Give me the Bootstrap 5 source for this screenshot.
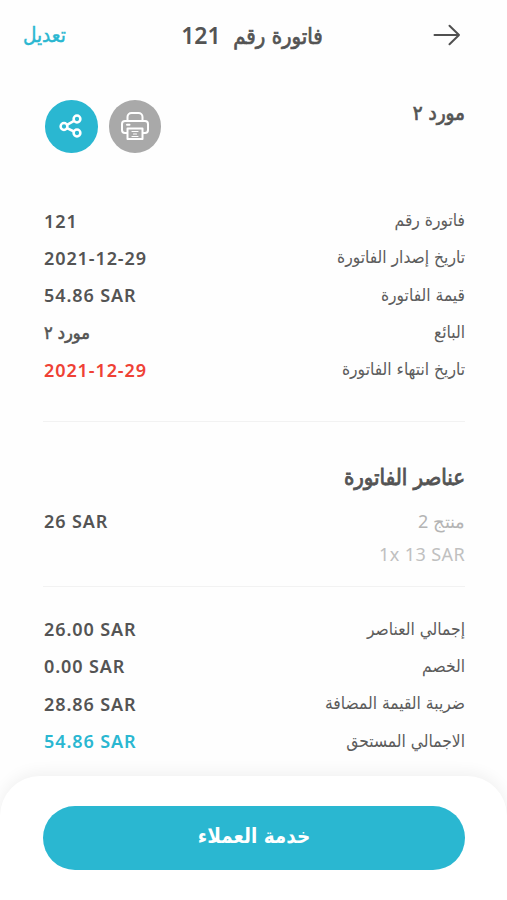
<!DOCTYPE html>
<html lang="ar" dir="rtl">
<head>
<meta charset="utf-8">
<meta name="viewport" content="width=device-width, initial-scale=1">
<title>فاتورة رقم 121</title>
<link href="https://cdn.jsdelivr.net/npm/bootstrap@5.3.0/dist/css/bootstrap.min.css" rel="stylesheet">
<style>
  :root { --ink: #545454; --brand: #2ab7d1; --ar: "DejaVu Sans Condensed", "DejaVu Sans", sans-serif; --latin: "Noto Sans", "Open Sans", sans-serif; }
  body { font-family: var(--ar); color: var(--ink); background: #fefefe; font-size: 17px; }
  .screen { height: 900px; overflow: hidden; }
  .topbar { height: 70px; padding: 0 46px 0 23px; }
  .topbar > * { flex: 1 1 0; }
  .topbar .title { font-size: 22px; flex: 0 0 auto; -webkit-text-stroke: .7px; margin-right: -20px; padding-top: 2px; }
  .num { font: 600 23px/1 var(--latin); letter-spacing: .4px; -webkit-text-stroke: 0; }
  .edit { color: var(--brand); font-size: 20.5px; text-decoration: none; text-align: left; -webkit-text-stroke: .4px; }
  .content { padding: 0 42px 0 43px; }
  .supplier { height: 132px; padding-top: 30px; }
  .supplier h2 { font-size: 20.500px; font-weight: 400; line-height: 27px; -webkit-text-stroke: .7px; }
  .actions { gap: 11px; padding-left: 2px; }
  .round { width: 52.5px; height: 52.5px; background: var(--brand); }
  .round.gray { background: #a9a9a9; }
  .line { height: 37.3px; }
  .item-line { height: 52px; }
  .label { font-size: 17.3px; color: #5c5c5c; padding-top: 1px; }
  .value { font: 600 18px var(--latin); letter-spacing: .9px; padding-left: 1px; }
  .value.ar { font-family: var(--ar); font-size: 18px; font-weight: 400; letter-spacing: 0; -webkit-text-stroke: .6px; }
  .rule { height: 1px; background: #f2f2f2; }
  .section-title { font-size: 22px; font-weight: 400; line-height: 34px; -webkit-text-stroke: .8px; }
  .muted { color: #b4b4b4; font: 18px var(--latin); }
  .qty { text-align: right; letter-spacing: .4px; margin-top: -5px; color: #c0c0c0; }
  .due { color: var(--brand); }
  .late { color: #ef4135; }
  .sheet { height: 124px; border-radius: 40px 40px 0 0; background: #fff; box-shadow: 0 -3px 16px rgba(0,0,0,.06); padding: 30px 42px 0 43px; }
  .cta, .cta:hover { height: 64px; background: var(--brand); color: #fff; font-size: 20.5px; font-weight: 700; padding: 0 0 4px; }
</style>
<script src="https://cdn.jsdelivr.net/npm/bootstrap@5.3.0/dist/js/bootstrap.bundle.min.js"></script>
</head>
<body>
<div class="screen d-flex flex-column">
  <header class="topbar d-flex align-items-center">
    <div class="d-flex"><svg width="28" height="22" viewBox="0 0 28 22" fill="none" stroke="#505050" stroke-width="2" stroke-linecap="round" stroke-linejoin="round"><path d="M1.500 11H26M16.500 1.800l9.500 9.200-9.500 9.200"/></svg></div>
    <div class="title">فاتورة رقم&nbsp; <span class="num">121</span></div>
    <a class="edit" href="#">تعديل</a>
  </header>
  <main class="content flex-grow-1">
    <section class="supplier d-flex justify-content-between">
      <h2 class="m-0">مورد ٢</h2>
      <div class="actions d-flex">
        <button class="btn p-0 border-0 rounded-circle round gray d-flex align-items-center justify-content-center" aria-label="طباعة">
          <svg width="30" height="30" viewBox="0 0 30 30" fill="none" stroke="#fff" stroke-width="2" stroke-linejoin="round" stroke-linecap="round"><path d="M7.500 10V6a4 4 0 0 1 4-4h7a4 4 0 0 1 4 4v4M7 22H5a3 3 0 0 1-3-3v-6a3 3 0 0 1 3-3h20a3 3 0 0 1 3 3v6a3 3 0 0 1-3 3h-2M7.500 17.500h15V28h-15zM7 13.800h2.500"/><path stroke-width="1.200" d="M12 20.500h6M13.500 23h3M12 25.500h6"/></svg>
        </button>
        <button class="btn p-0 border-0 rounded-circle round d-flex align-items-center justify-content-center" aria-label="مشاركة">
          <svg width="24" height="26" viewBox="0 0 24 26" fill="none" stroke="#fff" stroke-width="2.500"><circle cx="5" cy="13.500" r="3.400"/><circle cx="18" cy="6" r="3.400"/><circle cx="18" cy="20" r="3.400"/><path d="M8 11.800l7-4M8 15.200l7 3.300"/></svg>
        </button>
      </div>
    </section>
    <section>
      <div class="line d-flex align-items-center justify-content-between"><span class="label">فاتورة رقم</span><span class="value" dir="ltr">121</span></div>
      <div class="line d-flex align-items-center justify-content-between"><span class="label">تاريخ إصدار الفاتورة</span><span class="value" dir="ltr">2021-12-29</span></div>
      <div class="line d-flex align-items-center justify-content-between"><span class="label">قيمة الفاتورة</span><span class="value" dir="ltr">54.86 SAR</span></div>
      <div class="line d-flex align-items-center justify-content-between"><span class="label">البائع</span><span class="value ar">مورد ٢</span></div>
      <div class="line d-flex align-items-center justify-content-between"><span class="label">تاريخ انتهاء الفاتورة</span><span class="value late" dir="ltr">2021-12-29</span></div>
    </section>
    <div class="rule" style="margin-top:33px"></div>
    <h2 class="section-title mb-0" style="margin-top:39px">عناصر الفاتورة</h2>
    <div class="item-line d-flex align-items-center justify-content-between"><span class="muted">منتج 2</span><span class="value" dir="ltr">26 SAR</span></div>
    <div class="muted qty" dir="ltr">1x 13 SAR</div>
    <div class="rule" style="margin-top:20px"></div>
    <section style="margin-top:23px">
      <div class="line d-flex align-items-center justify-content-between"><span class="label">إجمالي العناصر</span><span class="value" dir="ltr">26.00 SAR</span></div>
      <div class="line d-flex align-items-center justify-content-between"><span class="label">الخصم</span><span class="value" dir="ltr">0.00 SAR</span></div>
      <div class="line d-flex align-items-center justify-content-between"><span class="label">ضريبة القيمة المضافة</span><span class="value" dir="ltr">28.86 SAR</span></div>
      <div class="line d-flex align-items-center justify-content-between"><span class="label">الاجمالي المستحق</span><span class="value due" dir="ltr">54.86 SAR</span></div>
    </section>
  </main>
  <footer class="sheet flex-shrink-0">
    <button class="btn cta rounded-pill w-100 border-0">خدمة العملاء</button>
  </footer>
</div>
</body>
</html>
